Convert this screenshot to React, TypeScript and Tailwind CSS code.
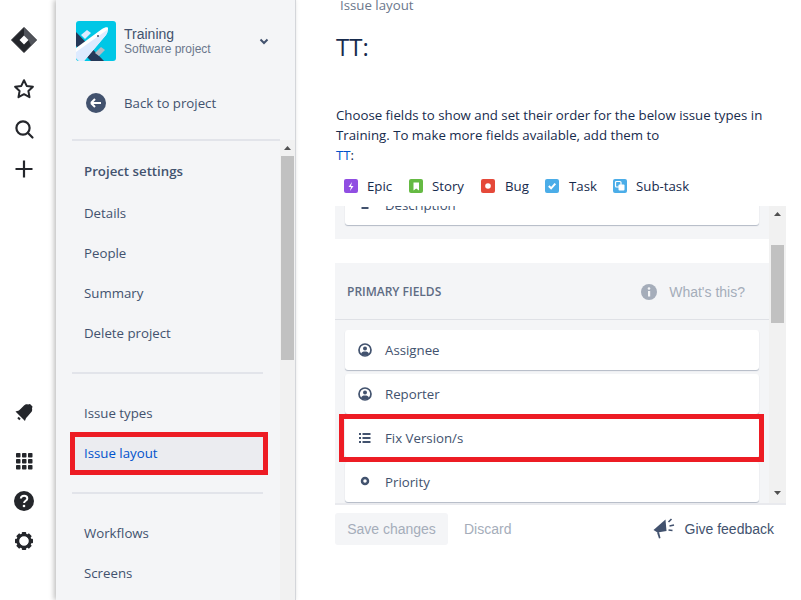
import React from "react";

const INK = "#24262b";

const Star = () => (
  <svg width="24" height="24" viewBox="0 0 24 24" fill="none" stroke={INK} strokeWidth="2" strokeLinejoin="round">
    <path d="M12 3.200l2.700 5.700 6.200.8-4.500 4.300 1.100 6.200-5.500-3-5.500 3 1.100-6.200-4.500-4.300 6.200-.8z" />
  </svg>
);
const Search = () => (
  <svg width="24" height="24" viewBox="0 0 24 24" fill="none" stroke={INK} strokeWidth="2.200" strokeLinecap="round">
    <circle cx="11" cy="11" r="6.600" />
    <path d="M16 16l4.500 4.500" />
  </svg>
);
const Plus = () => (
  <svg width="24" height="24" viewBox="0 0 24 24" stroke={INK} strokeWidth="2.200">
    <path d="M12 3.500v17M3.500 12h17" />
  </svg>
);
const Logo = () => (
  <svg width="28" height="28" viewBox="0 0 28 28">
    <path d="M14 1.500L26.500 14 14 26.500 1.500 14z" fill={INK} stroke={INK} strokeLinejoin="round" />
    <path d="M14 1.500L26.500 14 21 19.500 18.500 14 14 9.500z" fill="#50535a" />
    <path d="M14 9.500L18.500 14 14 18.500 9.500 14z" fill="#fff" />
  </svg>
);
const Bell = () => (
  <svg width="24" height="24" viewBox="0 0 24 24" fill={INK}>
    <path d="M3.500 10.500C6 10 7 9.500 8.500 8L12 4.500C13.500 3 15 3 16 3.500L18 3l2.500 2.500-.5 2c.5 1.500 0 3.500-1.500 4.500l-3 3.500c-1.500 1.500-2 2.500-2.500 4.500z" />
    <path d="M6 16.500l2 2" stroke={INK} strokeWidth="2" />
  </svg>
);
const Grid = () => (
  <svg width="18" height="18" viewBox="0 0 18 18" fill={INK}>
    {[1, 7, 13].map((y) =>
      [1, 7, 13].map((x) => <rect key={`${x}-${y}`} x={x} y={y} width="4.500" height="4.500" rx="0.800" />)
    )}
  </svg>
);
const Help = () => (
  <svg width="22" height="22" viewBox="0 0 22 22">
    <circle cx="11" cy="11" r="10" fill={INK} />
    <path d="M7.800 8.500c.2-1.800 1.500-2.800 3.300-2.800 1.900 0 3.200 1.100 3.200 2.700 0 2.300-3.200 2.400-3.200 4.500" fill="none" stroke="#fff" strokeWidth="2" />
    <circle cx="11" cy="16" r="1.300" fill="#fff" />
  </svg>
);
const Gear = () => (
  <svg width="24" height="24" viewBox="0 0 24 24">
    <g fill={INK}>
      {[0, 45, 90, 135, 180, 225, 270, 315].map((a) => (
        <rect key={a} x="9.800" y="3" width="4.400" height="4" rx="0.800" transform={`rotate(${a} 12 12)`} />
      ))}
    </g>
    <circle cx="12" cy="12" r="6.200" fill="none" stroke={INK} strokeWidth="2.800" />
  </svg>
);
const Plane = () => (
  <svg width="40" height="40" viewBox="0 0 40 40" className="rounded-[3px]">
    <rect width="40" height="40" fill="#00c7e6" />
    <path d="M0 11l28 29H15L0 25z" fill="#253858" />
    <path d="M5 14l6-5 4 3-6 6z" fill="#deebff" />
    <path d="M19 32l6-6 4 3-6 6z" fill="#b3bac5" />
    <path d="M0 37V27L26 8c3-2 6-2 6-1s0 4-2 7L8 40H3z" fill="#fff" />
    <path d="M0 37V31L31 9c1 1 0 3-1 5L8 40H3z" fill="#deebff" />
    <circle cx="22" cy="15" r="1" fill="#42526e" />
  </svg>
);
const PersonIcon = () => (
  <svg width="14" height="14" viewBox="0 0 14 14">
    <circle cx="7" cy="7" r="6" fill="none" stroke="#42526e" strokeWidth="1.700" />
    <circle cx="7" cy="5.500" r="2" fill="#42526e" />
    <path d="M3 11c.5-2 2-2.500 4-2.500s3.500.5 4 2.500l-2 1.500H5z" fill="#42526e" />
  </svg>
);
const ListIcon = () => (
  <svg width="14" height="14" viewBox="0 0 14 14" fill="#42526e">
    <rect x="1" y="2" width="2" height="2" />
    <rect x="1" y="6" width="2" height="2" />
    <rect x="1" y="10" width="2" height="2" />
    <rect x="4.500" y="2" width="8" height="2" />
    <rect x="4.500" y="6" width="8" height="2" />
    <rect x="4.500" y="10" width="8" height="2" />
  </svg>
);
const DotIcon = () => (
  <svg width="14" height="14" viewBox="0 0 14 14">
    <circle cx="7" cy="6" r="3" fill="none" stroke="#42526e" strokeWidth="2.500" />
  </svg>
);
const DashIcon = () => (
  <svg width="14" height="14" viewBox="0 0 14 14" fill="#42526e">
    <rect x="3.500" y="2" width="7" height="2" />
    <rect x="3.500" y="9" width="7" height="2" />
  </svg>
);

const types: { label: string; color: string; glyph: React.ReactNode; width: string; gap: string }[] = [
  { label: "Epic", color: "#904ee2", glyph: <path d="M8 3L4.500 8H7l-1 4 3.500-5H7z" fill="#fff" />, width: "w-[65px]", gap: "ml-[9px]" },
  { label: "Story", color: "#65ba43", glyph: <path d="M4.500 3.500h5.500v8L7.200 9.500 4.500 11.500z" fill="#fff" />, width: "w-[72px]", gap: "ml-[9px]" },
  { label: "Bug", color: "#e5493a", glyph: <circle cx="7" cy="7" r="2.800" fill="#fff" />, width: "w-[64px]", gap: "ml-[10px]" },
  { label: "Task", color: "#4bade8", glyph: <path d="M3.800 7l2.300 2.300 4.200-4.600" fill="none" stroke="#fff" strokeWidth="2" />, width: "w-[68px]", gap: "ml-[10px]" },
  {
    label: "Sub-task",
    color: "#4bade8",
    glyph: (
      <g>
        <rect x="2.500" y="2.500" width="5.500" height="5.500" rx="1" fill="none" stroke="#fff" strokeWidth="1.200" />
        <rect x="5.500" y="5.500" width="6" height="6" rx="1" fill="#fff" />
      </g>
    ),
    width: "w-[100px]",
    gap: "ml-[9px]",
  },
];

const Row = ({ icon, label, className = "" }: { icon: React.ReactNode; label: string; className?: string }) => (
  <div className={`flex h-10 items-center rounded-[3px] bg-white pl-[13px] shadow-[0_1px_1px_#b3bac5] ${className}`}>
    <span className="flex w-[14px] justify-center">{icon}</span>
    <span className="ml-[13px] text-[#42526e]">{label}</span>
  </div>
);

const NavItem = ({ children }: { children: React.ReactNode }) => (
  <div className="flex h-10 items-center pl-3 text-[#42526e]">{children}</div>
);

const Arrow = ({ down }: { down?: boolean }) => (
  <svg width="15" height="16" viewBox="0 0 15 16" fill="#505050">
    <path d={down ? "M4 6h7L7.500 10z" : "M4 10h7L7.500 6z"} />
  </svg>
);

export default function App() {
  return (
    <div className="flex h-[600px] w-[801px] overflow-hidden bg-white font-['Open_Sans','Noto_Sans',sans-serif] text-[13.250px] leading-5">
      <aside className="flex w-14 shrink-0 flex-col justify-between bg-white pb-[39px] pr-2 pt-5">
        <div className="flex flex-col items-center">
          <div className="mb-[9px] flex h-10 items-center justify-center"><Logo /></div>
          <div className="flex h-10 items-center justify-center"><Star /></div>
          <div className="flex h-10 items-center justify-center"><Search /></div>
          <div className="flex h-10 items-center justify-center"><Plus /></div>
        </div>
        <div className="flex flex-col items-center">
          <div className="mb-2 flex h-10 items-center justify-center"><Bell /></div>
          <div className="flex h-10 items-center justify-center"><Grid /></div>
          <div className="flex h-10 items-center justify-center"><Help /></div>
          <div className="flex h-10 items-center justify-center"><Gear /></div>
        </div>
      </aside>

      <nav className="relative flex w-[240px] shrink-0 flex-col border-r border-[#d4d6da] bg-[#f4f5f7] shadow-[-2px_0_5px_rgba(0,0,0,0.25)]">
        <div className="flex h-[139px] shrink-0 flex-col pl-5 pr-[25px] pt-[21px]">
          <div className="flex h-10 items-center">
            <Plane />
            <div className="ml-2 flex-1 font-['Liberation_Sans',sans-serif]">
              <div className="text-sm leading-[16px] text-[#42526e]">Training</div>
              <div className="text-xs leading-[14px] text-[#6b778c]">Software project</div>
            </div>
            <svg width="12" height="12" viewBox="0 0 12 12" fill="none" stroke="#42526e" strokeWidth="2">
              <path d="M2.500 4.500L6 8l3.500-3.500" />
            </svg>
          </div>
          <div className="mt-8 flex h-5 items-center text-[#42526e]">
            <svg width="20" height="20" viewBox="0 0 20 20" className="ml-[10px]">
              <circle cx="10" cy="10" r="10" fill="#42526e" />
              <path d="M5 10h10M5 10l4-4M5 10l4 4" stroke="#fff" strokeWidth="2" fill="none" />
            </svg>
            <span className="ml-[18px]">Back to project</span>
          </div>
        </div>
        <div className="ml-4 h-[2px] w-[208px] shrink-0 bg-[#e2e4ea]" />
        <div className="flex min-h-0 flex-1">
          <div className="w-[224px] pl-4">
            <div className="flex h-[60px] items-center pl-3 font-semibold text-[#42526e]">Project settings</div>
            <div className="-mt-2">
              <NavItem>Details</NavItem>
              <NavItem>People</NavItem>
              <NavItem>Summary</NavItem>
              <NavItem>Delete project</NavItem>
            </div>
            <div className="my-[19px] h-[2px] w-[191px] bg-[#e2e4ea]" />
            <NavItem>Issue types</NavItem>
            <div className="flex h-10 w-[192px] items-center bg-[#ebecf0] pl-3 text-[#0052cc]">Issue layout</div>
            <div className="my-[19px] h-[2px] w-[191px] bg-[#e2e4ea]" />
            <NavItem>Workflows</NavItem>
            <NavItem>Screens</NavItem>
          </div>
          <div className="-mt-px flex w-[15px] flex-col items-center bg-[#f1f1f1]">
            <Arrow />
            <div className="h-[204px] w-[13px] bg-[#c1c1c1]" />
          </div>
        </div>
      </nav>

      <main className="relative min-w-0 flex-1 pl-[39px] pr-[15px] text-[#172b4d]">
        <div className="-mt-[5px] pl-[5px] text-[#6b778c]">Issue layout</div>
        <h1 className="mt-[18px] pl-px text-2xl leading-7">TT:</h1>
        <p className="mt-[44px] pl-[1px]">
          Choose fields to show and set their order for the below issue types in Training. To make more fields available, add them to
          <br />
          <span className="text-[#0052cc]">TT</span>:
        </p>
        <div className="mt-[10px] flex h-[22px] items-center pl-[9px]">
          {types.map((t) => (
            <div key={t.label} className={`flex items-center ${t.width}`}>
              <svg width="14" height="14" viewBox="0 0 14 14">
                <rect width="14" height="14" rx="2" fill={t.color} />
                {t.glyph}
              </svg>
              <span className={t.gap}>{t.label}</span>
            </div>
          ))}
        </div>
        <div className="mt-[9px] flex h-[299px] overflow-hidden border-b-2 border-[#e9eaee]">
          <div className="min-w-0 flex-1">
            <div className="h-[33px] overflow-hidden bg-[#f4f5f7] px-[10px]">
              <Row icon={<DashIcon />} label="Description" className="-mt-[21px]" />
            </div>
            <div className="h-6" />
            <div className="h-full bg-[#f4f5f7]">
              <div className="flex h-[57px] items-center justify-between border-b border-[#dfe1e6] pl-3 pr-6 pt-[2px]">
                <span className="text-xs font-semibold uppercase text-[#5e6c84]">Primary fields</span>
                <span className="flex items-center font-['Liberation_Sans',sans-serif] text-sm text-[#a5adba]">
                  <svg width="16" height="16" viewBox="0 0 16 16" className="mr-3">
                    <circle cx="8" cy="8" r="8" fill="#a5adba" />
                    <rect x="7" y="7" width="2.200" height="5.500" fill="#f4f5f7" />
                    <circle cx="8" cy="4.500" r="1.300" fill="#f4f5f7" />
                  </svg>
                  What's this?
                </span>
              </div>
              <div className="flex flex-col gap-1 px-[10px] pt-[10px]">
                <Row icon={<PersonIcon />} label="Assignee" />
                <Row icon={<PersonIcon />} label="Reporter" />
                <Row icon={<ListIcon />} label="Fix Version/s" />
                <Row icon={<DotIcon />} label="Priority" />
              </div>
            </div>
          </div>
          <div className="flex w-[17px] shrink-0 flex-col items-center justify-between bg-[#f1f1f1]">
            <div className="flex w-full flex-col items-center">
              <Arrow />
              <div className="mt-[23px] h-[78px] w-[13px] bg-[#c1c1c1]" />
            </div>
            <div className="mb-[2px]"><Arrow down /></div>
          </div>
        </div>
        <div className="mt-2 flex items-center font-['Liberation_Sans',sans-serif] text-sm">
          <div className="flex h-8 w-[113px] items-center justify-center rounded-[3px] bg-[#f4f5f7] text-[#a5adba]">Save changes</div>
          <span className="ml-4 text-[#a5adba]">Discard</span>
          <div className="ml-auto flex items-center pr-[12px] text-[#42526e]">
            <svg width="22" height="22" viewBox="0 0 22 22" fill="#42526e">
              <path d="M0.500 12L12.500 1.500l1 11.500-9 1.500z" />
              <path d="M4 14.500l2-.5 1.500 6-1.500.5z" />
              <path d="M15.500 4l3-3M16.500 8l4.500-1M15.500 12l4 .5" stroke="#42526e" strokeWidth="1.600" fill="none" />
            </svg>
            <span className="ml-[10px]">Give feedback</span>
          </div>
        </div>
      </main>

      <div className="pointer-events-none absolute left-[70px] top-[432px] h-[43px] w-[198px] border-[5px] border-[#ed1c24]" />
      <div className="pointer-events-none absolute left-[339px] top-[414px] h-[48px] w-[425px] border-[5px] border-[#ed1c24]" />
    </div>
  );
}
